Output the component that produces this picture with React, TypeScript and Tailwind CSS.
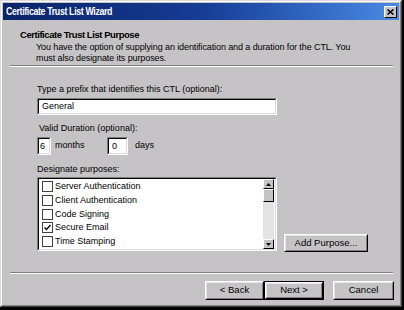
import React from "react";

const font = { fontFamily: '"Liberation Sans", Arial, sans-serif' };

function Sunken({ className = "", children }: { className?: string; children?: React.ReactNode }) {
  return (
    <div className={"border border-t-[#808080] border-l-[#808080] border-b-white border-r-white " + className}>
      <div className="h-full w-full border border-t-black border-l-black border-b-[#dcdcdc] border-r-[#dcdcdc] bg-white">
        {children}
      </div>
    </div>
  );
}

function Button({ label, wide = "", isDefault = false }: { label: string; wide?: string; isDefault?: boolean }) {
  const inner = (
    <div className="h-full w-full border border-t-white border-l-white border-b-black border-r-black">
      <div className="flex h-full w-full items-center justify-center border border-t-[#e6e6e6] border-l-[#e6e6e6] border-b-[#808080] border-r-[#808080] text-[9.5px] text-black">
        {label}
      </div>
    </div>
  );
  return isDefault ? (
    <div className={"border border-black " + wide}>{inner}</div>
  ) : (
    <div className={wide}>{inner}</div>
  );
}

function Etched({ className = "" }: { className?: string }) {
  return (
    <div className={className}>
      <div className="h-px bg-[#808080]" />
      <div className="h-px bg-white" />
    </div>
  );
}

function Check({ checked = false }: { checked?: boolean }) {
  return (
    <div className="h-[11px] w-[11px] border border-[#404040] bg-white flex items-center justify-center">
      {checked && (
        <svg width="7" height="7" viewBox="0 0 7 7">
          <path d="M0.5 3.5 L2.5 5.5 L6.5 1" stroke="black" strokeWidth="1.4" fill="none" />
        </svg>
      )}
    </div>
  );
}

function Arrow({ up }: { up: boolean }) {
  return (
    <div className="h-[10px] w-[11px] border border-t-white border-l-white border-b-black border-r-black bg-[#c6c3c6] flex items-center justify-center">
      <svg width="5" height="3" viewBox="0 0 5 3">
        <path d={up ? "M0 3 L2.5 0 L5 3 Z" : "M0 0 L2.5 3 L5 0 Z"} fill="black" />
      </svg>
    </div>
  );
}

export default function App() {
  const purposes = [
    { name: "Server Authentication", checked: false },
    { name: "Client Authentication", checked: false },
    { name: "Code Signing", checked: false },
    { name: "Secure Email", checked: true },
    { name: "Time Stamping", checked: false },
    { name: "", checked: false },
  ];

  return (
    <div style={font} className="h-[310px] w-[404px] overflow-hidden bg-black">
      <div className="h-[307px] w-[402px] border border-t-[#dcdcdc] border-l-[#dcdcdc] border-b-[#404040] border-r-[#404040] bg-[#c6c3c6]">
        <div className="h-full w-full border border-t-white border-l-white border-b-[#808080] border-r-[#808080] px-px pt-px">
          {/* title bar */}
          <div className="flex h-[17px] items-center justify-between bg-gradient-to-r from-[#0a246a] via-[#163c94] to-[#4a8ae6] pl-[3px] pr-[2px]">
            <span className="origin-left scale-x-[0.88] whitespace-nowrap text-[10px] font-bold tracking-[-0.4px] text-white">
              Certificate Trust List Wizard
            </span>
            <div className="flex h-[12px] w-[13px] items-center justify-center border border-t-white border-l-white border-b-black border-r-black bg-[#c6c3c6]">
              <svg width="7" height="6" viewBox="0 0 7 6">
                <path d="M0.5 0.5 L6.5 5.5 M6.5 0.5 L0.5 5.5" stroke="black" strokeWidth="1.6" />
              </svg>
            </div>
          </div>

          {/* header */}
          <div className="pl-[17px] pt-[8px] text-[9px] text-black">
            <div className="h-[13px] text-[9.5px] font-bold leading-[13px] tracking-[-0.45px]">Certificate Trust List Purpose</div>
            <div className="pl-[16px] pt-[1px] leading-[11px] tracking-[-0.1px]">
              <div>You have the option of supplying an identification and a duration for the CTL. You</div>
              <div>must also designate its purposes.</div>
            </div>
          </div>
          <Etched className="ml-[7px] mr-[6px] mt-[1px]" />

          {/* body */}
          <div className="pl-[34px] text-[9px] text-black">
            <div className="mt-[17px] leading-[11px]">Type a prefix that identifies this CTL (optional):</div>
            <Sunken className="mt-[3px] h-[17px] w-[240px]">
              <div className="pl-[3px] leading-[13px]">General</div>
            </Sunken>
            <div className="ml-[2px] mt-[8px] leading-[11px]">Valid Duration (optional):</div>
            <div className="mt-[3px] flex items-center">
              <Sunken className="h-[18px] w-[14px]">
                <div className="pl-[1px] leading-[14px]">6</div>
              </Sunken>
              <span className="ml-[4px] w-[52px]">months</span>
              <Sunken className="h-[18px] w-[21px]">
                <div className="pl-[3px] leading-[14px]">0</div>
              </Sunken>
              <span className="ml-[7px]">days</span>
            </div>
            <div className="mt-[9px] leading-[11px]">Designate purposes:</div>
            <div className="mt-[2px] flex items-end">
              <Sunken className="h-[74px] w-[240px]">
                <div className="flex h-full">
                  <div className="flex-1 overflow-hidden pl-[3px] pt-[1px]">
                    {purposes.map((p, i) => (
                      <div key={i} className="flex h-[13.7px] items-center gap-[2px]">
                        <Check checked={p.checked} />
                        <span className="leading-[11px]">{p.name}</span>
                      </div>
                    ))}
                  </div>
                  <div className="flex w-[11px] flex-col bg-[#e4e2e4]">
                    <Arrow up />
                    <div className="h-[13px] w-[11px] border border-t-white border-l-white border-b-black border-r-black bg-[#c6c3c6]" />
                    <div className="flex-1" />
                    <Arrow up={false} />
                  </div>
                  <div className="w-px" />
                </div>
              </Sunken>
              <div className="mb-[-1px] ml-[7px] h-[18px]">
                <Button label="Add Purpose..." wide="h-[18px] w-[84px]" />
              </div>
            </div>
          </div>

          <Etched className="ml-[7px] mr-[6px] mt-[21px]" />

          {/* buttons */}
          <div className="mt-[7px] flex pl-[202px]">
            <Button label="< Back" wide="h-[19px] w-[59px]" />
            <Button label="Next >" wide="h-[19px] w-[60px]" isDefault />
            <div className="ml-[9px]">
              <Button label="Cancel" wide="h-[19px] w-[61px]" />
            </div>
          </div>
        </div>
      </div>
    </div>
  );
}
